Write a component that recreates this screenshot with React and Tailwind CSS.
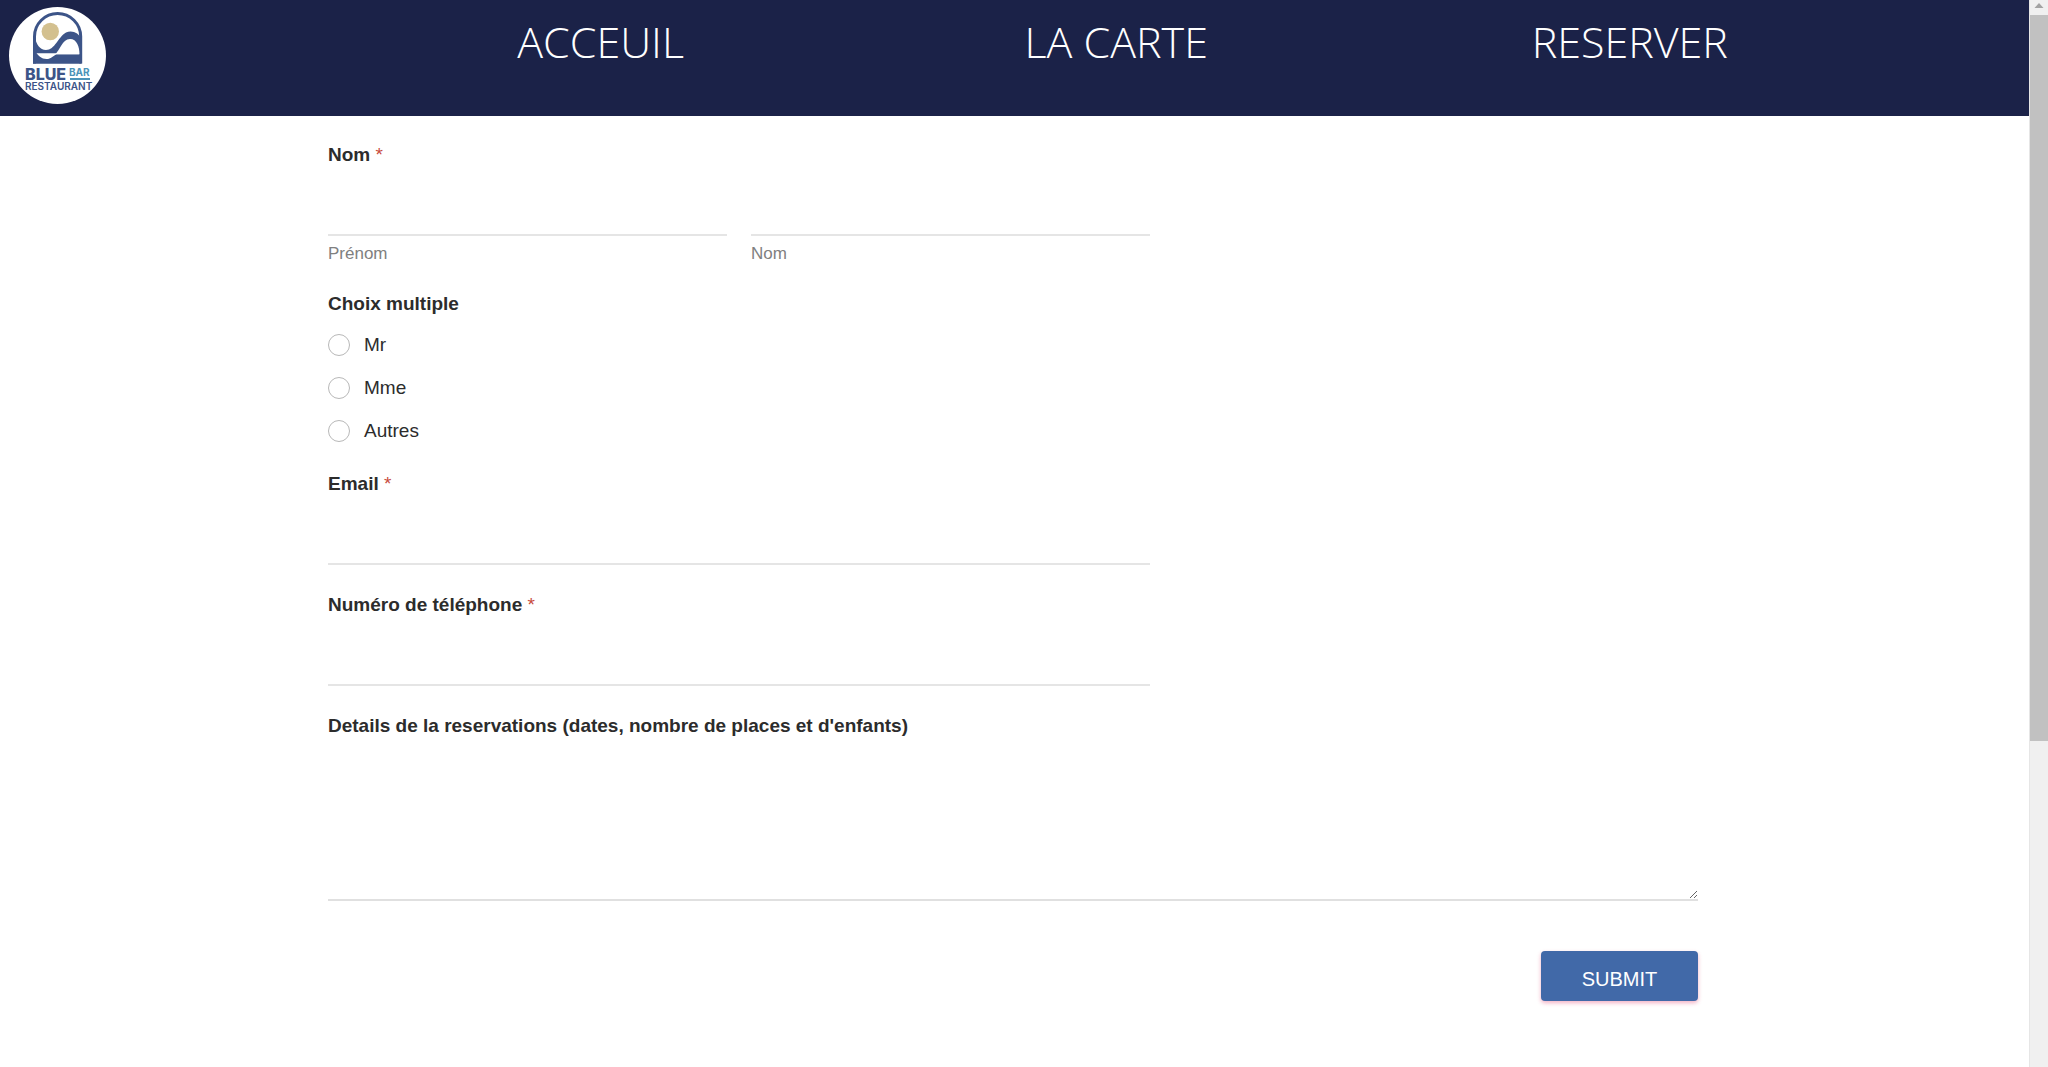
import { useState } from 'react';

const NAV_LINKS = [
  { label: 'ACCEUIL', href: '#acceuil' },
  { label: 'LA CARTE', href: '#carte' },
  { label: 'RESERVER', href: '#reserver' },
];

const TITLES = ['Mr', 'Mme', 'Autres'];

const LABEL = 'block text-[19px] leading-6 font-bold text-[#2c2c2c]';
const FIELD =
  'block w-full h-[69px] px-2 text-[19px] bg-transparent border-b-2 border-[#e5e5e5] outline-none focus:border-[#4169a8]';
const SUB_LABEL = 'block pt-2 text-[17px] leading-5 text-[#808080]';

/**
 * Logo Blue Bar Restaurant
 */
function Logo() {
  return (
    <svg viewBox="0 0 97 97" className="size-[97px]" role="img" aria-label="Blue Bar Restaurant">
      <circle cx="48.5" cy="48.5" r="48.5" fill="#fff" />
      <circle cx="41.3" cy="24.5" r="8.7" fill="#d3c08f" />
      {/* Arche */}
      <path d="M25.5 56.5V29.6a23.1 23.1 0 0 1 46.2 0V56.5" fill="none" stroke="#3c5488" strokeWidth="3" />
      {/* Vague */}
      <path
        d="M26 30C27 37 31 43 37 43C46 43 49 30 57 25.500C63 22.500 70 26 72.500 32V56.700H24V30Z"
        fill="#3c5488"
      />
      <path d="M46 47.200C51 44 53 32 61 32C68 32 70.500 40 70.500 47.200Z" fill="#fff" />
      <path d="M27.500 46.300H70V47.200H47.500C44 49 42 52 37.500 52C32 52 30 49 27.500 46.300Z" fill="#fff" />
      <text x="16" y="73" className="font-['Inter',sans-serif] text-[16px] font-extrabold" fill="#3c5488">BLUE</text>
      <text x="60" y="69" className="font-['Inter',sans-serif] text-[10px] font-bold" fill="#4b93b8">BAR</text>
      <rect x="61" y="71" width="20" height="2" fill="#4b93b8" />
      <text x="16" y="83" className="font-['Inter',sans-serif] text-[10px] font-semibold" fill="#3c5488">RESTAURANT</text>
    </svg>
  );
}

/**
 * Barre de navigation
 */
function Header() {
  return (
    <header className="grid grid-cols-4 items-start pt-[7px] pb-3 bg-[#1b2248]">
      <a href="#acceuil" className="ml-[9px] justify-self-start">
        <Logo />
      </a>
      {NAV_LINKS.map((link) => (
        <a
          key={link.label}
          href={link.href}
          className="pt-2 pl-[10px] font-['Open_Sans',sans-serif] text-[43px] leading-[54px] font-light text-white"
        >
          {link.label}
        </a>
      ))}
    </header>
  );
}

function Required() {
  return <span className="font-normal text-[#c84a3c]"> *</span>;
}

/**
 * Formulaire de réservation
 */
function ReservationForm() {
  const [title, setTitle] = useState('');

  return (
    <form className="w-full max-w-[1370px] mx-auto pt-[27px]" onSubmit={(e) => e.preventDefault()}>
      <div className="w-3/5">
        <fieldset>
          <legend className={LABEL}>
            Nom
            <Required />
          </legend>
          <div className="grid grid-cols-2 gap-6">
            <div>
              <input id="prenom" type="text" className={FIELD} />
              <label htmlFor="prenom" className={SUB_LABEL}>Prénom</label>
            </div>
            <div>
              <input id="nom" type="text" className={FIELD} />
              <label htmlFor="nom" className={SUB_LABEL}>Nom</label>
            </div>
          </div>
        </fieldset>

        <fieldset className="mt-7">
          <legend className={LABEL}>Choix multiple</legend>
          <div className="flex flex-col gap-[19px] pt-[17px] pb-px">
            {TITLES.map((item) => (
              <label key={item} className="flex items-center gap-[14px] text-[19px] leading-6 text-[#2c2c2c]">
                <input
                  type="radio"
                  name="titre"
                  value={item}
                  checked={title === item}
                  onChange={() => setTitle(item)}
                  className="appearance-none size-[22px] rounded-full border border-[#b8b8b8] checked:border-[6px] checked:border-[#4169a8]"
                />
                {item}
              </label>
            ))}
          </div>
        </fieldset>

        <div className="mt-7">
          <label htmlFor="email" className={LABEL}>
            Email
            <Required />
          </label>
          <input id="email" type="email" className={FIELD} />
        </div>

        <div className="mt-7">
          <label htmlFor="telephone" className={LABEL}>
            Numéro de téléphone
            <Required />
          </label>
          <input id="telephone" type="tel" className={FIELD} />
        </div>
      </div>

      <div className="mt-7">
        <label htmlFor="details" className={LABEL}>
          Details de la reservations (dates, nombre de places et d'enfants)
        </label>
        <textarea
          id="details"
          className="block w-full h-[163px] px-2 text-[19px] border-b-2 border-[#e0e0e0] outline-none resize"
        />
      </div>

      <div className="flex justify-end pt-[50px] pb-16">
        <button
          type="submit"
          className="w-[157px] h-[50px] pt-[6px] rounded-sm bg-[#4169a8] text-[20px] text-white shadow-[0_2px_4px_rgba(224,60,110,0.4)]"
        >
          SUBMIT
        </button>
      </div>
    </form>
  );
}

/**
 * Barre de défilement
 */
function ScrollRail() {
  return (
    <div className="flex flex-col w-[19px] shrink-0 border-l border-[#e6e6e6] bg-[#f0f0f0]" aria-hidden="true">
      <svg viewBox="0 0 18 15" className="w-full h-[15px]">
        <path d="M9 3L13.500 8H4.500Z" fill="#a3a3a3" />
      </svg>
      <div className="h-[68%] bg-[#c1c1c1]" />
    </div>
  );
}

function App() {
  return (
    <div className="flex h-screen bg-white font-['Liberation_Sans',Arial,sans-serif]">
      <div className="flex-1 min-w-0 overflow-hidden">
        <Header />
        <main className="pr-[3px]">
          <ReservationForm />
        </main>
      </div>
      <ScrollRail />
    </div>
  );
}

export default App;
